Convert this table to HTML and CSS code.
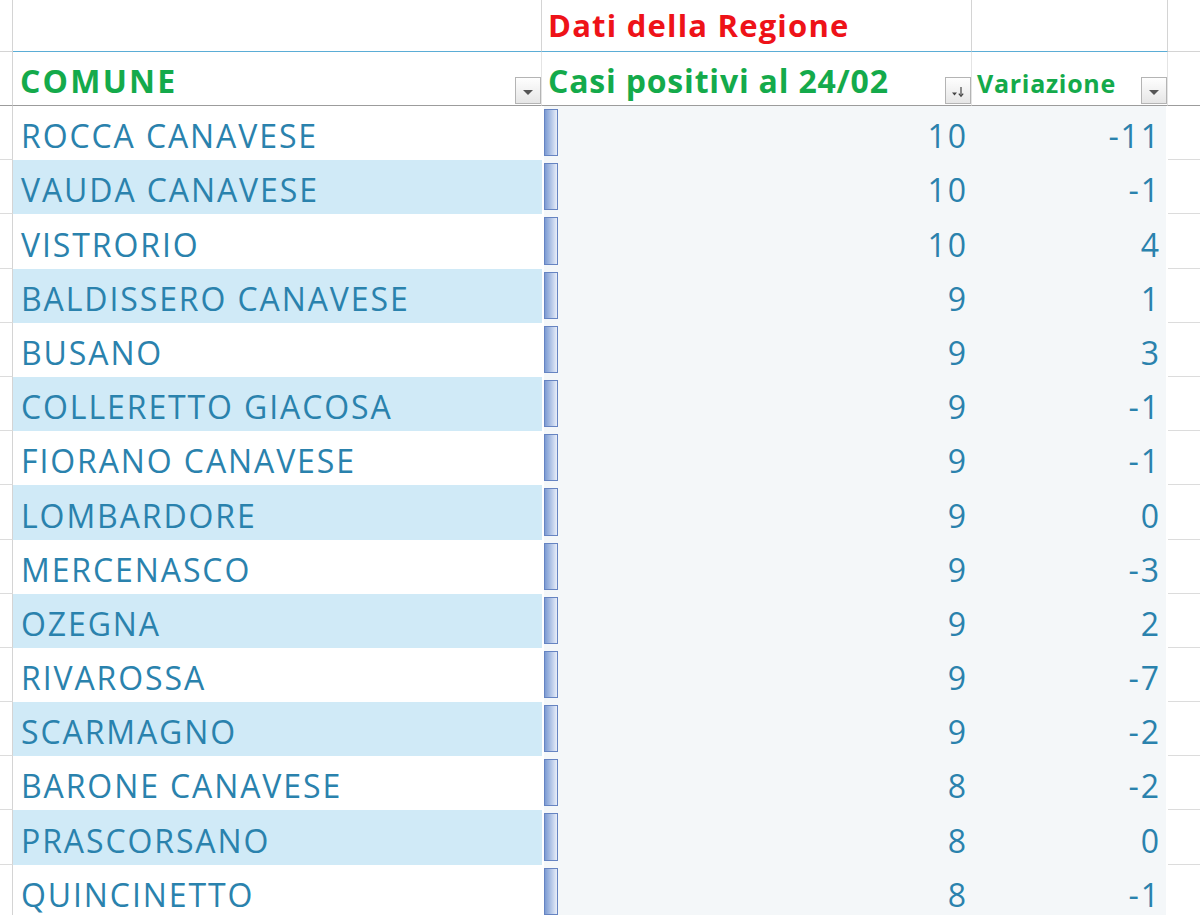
FILE: index.html
```html
<!DOCTYPE html>
<html lang="it">
<head>
<meta charset="utf-8">
<title>Dati della Regione</title>
<link rel="stylesheet" href="styles.css">
</head>
<body>
<div class="sheet">
  <div class="row row-top">
    <div class="m"></div>
    <div class="c1"></div>
    <div class="c2"><span class="title">Dati della Regione</span></div>
    <div class="c3"></div>
    <div class="r"></div>
  </div>
  <div class="row row-head">
    <div class="m"></div>
    <div class="c1"><span class="h h1">COMUNE</span><span class="fbtn"><span class="tri"></span></span></div>
    <div class="c2"><span class="h h2">Casi positivi al 24/02</span><span class="fbtn"><svg width="14" height="12" viewBox="0 0 14 12"><path d="M1 6.5 L6 6.5 L3.5 9.5 Z" fill="#444"/><path d="M10 1 L10 10" stroke="#444" stroke-width="1.2"/><path d="M7.8 7.6 L10 10.4 L12.2 7.6" stroke="#444" stroke-width="1.2" fill="none"/></svg></span></div>
    <div class="c3"><span class="h small">Variazione</span><span class="fbtn"><span class="tri"></span></span></div>
    <div class="r"></div>
  </div>
  <div class="row data"><div class="m"></div><div class="c1">ROCCA CANAVESE</div><div class="c2"><span class="bar"></span><span class="num">10</span></div><div class="c3"><span class="num">-11</span></div><div class="r"></div></div>
  <div class="row data band"><div class="m"></div><div class="c1">VAUDA CANAVESE</div><div class="c2"><span class="bar"></span><span class="num">10</span></div><div class="c3"><span class="num">-1</span></div><div class="r"></div></div>
  <div class="row data"><div class="m"></div><div class="c1">VISTRORIO</div><div class="c2"><span class="bar"></span><span class="num">10</span></div><div class="c3"><span class="num">4</span></div><div class="r"></div></div>
  <div class="row data band"><div class="m"></div><div class="c1">BALDISSERO CANAVESE</div><div class="c2"><span class="bar"></span><span class="num">9</span></div><div class="c3"><span class="num">1</span></div><div class="r"></div></div>
  <div class="row data"><div class="m"></div><div class="c1">BUSANO</div><div class="c2"><span class="bar"></span><span class="num">9</span></div><div class="c3"><span class="num">3</span></div><div class="r"></div></div>
  <div class="row data band"><div class="m"></div><div class="c1">COLLERETTO GIACOSA</div><div class="c2"><span class="bar"></span><span class="num">9</span></div><div class="c3"><span class="num">-1</span></div><div class="r"></div></div>
  <div class="row data"><div class="m"></div><div class="c1">FIORANO CANAVESE</div><div class="c2"><span class="bar"></span><span class="num">9</span></div><div class="c3"><span class="num">-1</span></div><div class="r"></div></div>
  <div class="row data band"><div class="m"></div><div class="c1">LOMBARDORE</div><div class="c2"><span class="bar"></span><span class="num">9</span></div><div class="c3"><span class="num">0</span></div><div class="r"></div></div>
  <div class="row data"><div class="m"></div><div class="c1">MERCENASCO</div><div class="c2"><span class="bar"></span><span class="num">9</span></div><div class="c3"><span class="num">-3</span></div><div class="r"></div></div>
  <div class="row data band"><div class="m"></div><div class="c1">OZEGNA</div><div class="c2"><span class="bar"></span><span class="num">9</span></div><div class="c3"><span class="num">2</span></div><div class="r"></div></div>
  <div class="row data"><div class="m"></div><div class="c1">RIVAROSSA</div><div class="c2"><span class="bar"></span><span class="num">9</span></div><div class="c3"><span class="num">-7</span></div><div class="r"></div></div>
  <div class="row data band"><div class="m"></div><div class="c1">SCARMAGNO</div><div class="c2"><span class="bar"></span><span class="num">9</span></div><div class="c3"><span class="num">-2</span></div><div class="r"></div></div>
  <div class="row data"><div class="m"></div><div class="c1">BARONE CANAVESE</div><div class="c2"><span class="bar"></span><span class="num">8</span></div><div class="c3"><span class="num">-2</span></div><div class="r"></div></div>
  <div class="row data band"><div class="m"></div><div class="c1">PRASCORSANO</div><div class="c2"><span class="bar"></span><span class="num">8</span></div><div class="c3"><span class="num">0</span></div><div class="r"></div></div>
  <div class="row data"><div class="m"></div><div class="c1">QUINCINETTO</div><div class="c2"><span class="bar"></span><span class="num">8</span></div><div class="c3"><span class="num">-1</span></div><div class="r"></div></div>
</div>
</body>
</html>
```
FILE: styles.css
```css
html, body {
  margin: 0;
  padding: 0;
  background: #fff;
  overflow: hidden;
}
body {
  width: 1200px;
  height: 915px;
  font-family: "Open Sans", "Liberation Sans", sans-serif;
}
.sheet {
  display: flex;
  flex-direction: column;
}
.row {
  display: grid;
  grid-template-columns: 13px 529px 430px 196px 32px;
}
.row > div {
  box-sizing: border-box;
  display: flex;
  align-items: flex-end;
}
.m {
  border-right: 1px solid #d4d4d4;
}

/* top title row */
.row-top {
  height: 52px;
}
.row-top > div {
  border-bottom: 1px solid #5badd6;
}
.row-top .m, .row-top .r {
  border-bottom-color: #d4d4d4;
}
.row-top .c1, .row-top .c2, .row-top .c3 {
  border-right: 1px solid #d4d4d4;
}
.title {
  color: #ee1218;
  font-weight: 700;
  font-size: 31px;
  line-height: 31px;
  letter-spacing: 1.2px;
  padding: 0 0 10px 6px;
}

/* header row */
.row-head {
  height: 54px;
}
.row-head > div {
  border-bottom: 1px solid #9c9c9c;
  justify-content: space-between;
}
.row-head .c1, .row-head .c2, .row-head .c3 {
  border-right: 1px solid #e4e4e4;
}
.h {
  color: #14aa4b;
  font-weight: 700;
  font-size: 32px;
  line-height: 32px;
  padding: 0 0 8px 7px;
}
.h1 {
  letter-spacing: 2.2px;
}
.h2 {
  letter-spacing: 0.8px;
}
.row-head .c2 .h {
  padding-left: 6px;
}
.h.small {
  font-size: 25px;
  line-height: 25px;
  letter-spacing: 0.7px;
  padding: 0 0 9px 5px;
}
.fbtn {
  box-sizing: border-box;
  width: 26px;
  height: 27px;
  margin: 0 0 1px 0;
  border: 1px solid #b4b4b4;
  background: linear-gradient(#fefefe, #e6e6e6);
  display: flex;
  align-items: center;
  justify-content: center;
  flex: none;
}
.fbtn svg {
  margin-top: 3px;
}
.tri {
  width: 0;
  height: 0;
  border-left: 5px solid transparent;
  border-right: 5px solid transparent;
  border-top: 5px solid #555;
  margin-top: 3px;
}

/* data rows */
.data {
  height: 54.2px;
  color: #2a82ad;
  font-size: 32px;
  letter-spacing: 1.9px;
}
.data .m, .data .r {
  border-bottom: 1px solid #dcdcdc;
}
.data .c1 {
  padding: 0 0 9px 8px;
  line-height: 31px;
}
.band .c1 {
  background: #d0eaf7;
}
.data .c2 {
  border-left: 2px solid #fff;
  background: #f4f7f9;
  justify-content: space-between;
  align-items: stretch;
  padding-right: 4px;
}
.data .c3 {
  border-right: 2px solid #fff;
  background: #f4f7f9;
  justify-content: flex-end;
  padding-right: 5px;
}
.bar {
  box-sizing: border-box;
  width: 14px;
  margin: 3px 0 4px 0;
  border: 1px solid #6684c2;
  background: linear-gradient(to right, #7c9bd3, #c7d5ee 70%, #e9eef8);
  flex: none;
}
.num {
  line-height: 31px;
  padding-bottom: 9px;
  align-self: flex-end;
}
```
